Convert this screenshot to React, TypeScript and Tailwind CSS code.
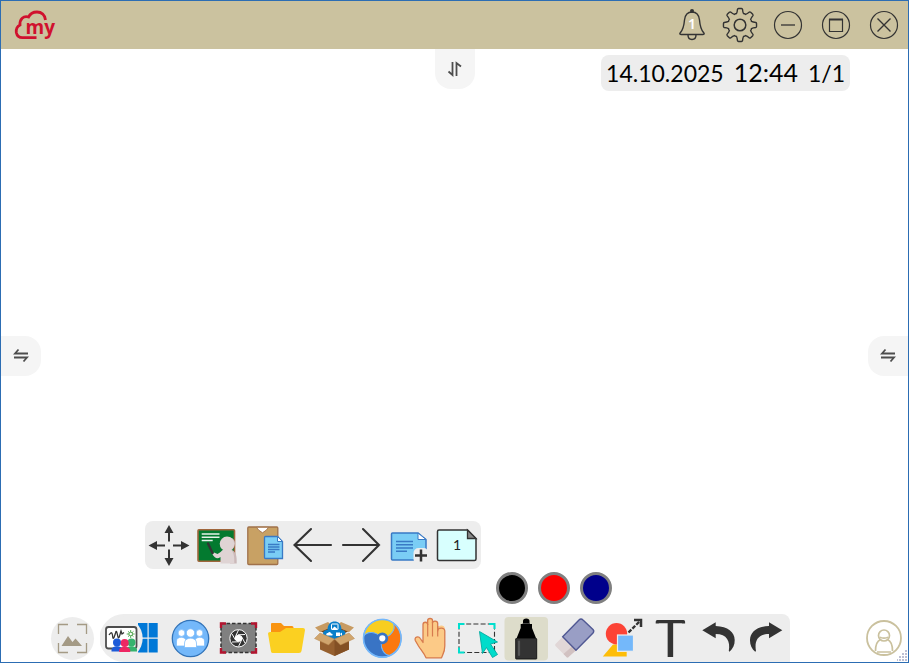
import type { ReactNode } from "react";
import clsx from "clsx";

interface IconProps {
  children: ReactNode;
  width?: number;
  height?: number;
}

const Icon = ({ children, width = 48, height = 48 }: IconProps) => (
  <svg width={width} height={height} viewBox={`0 0 ${width} ${height}`} fill="none" aria-hidden="true" className="block shrink-0">
    {children}
  </svg>
);

interface ToolButtonProps {
  label: string;
  children: ReactNode;
  className?: string;
}

const ToolButton = ({ label, children, className }: ToolButtonProps) => (
  <button type="button" aria-label={label} className={clsx("flex h-12 shrink-0 items-center justify-center", className ?? "w-12")}>
    {children}
  </button>
);

// Outline of an eight-toothed cog around (24, 24)
const gearPath = () => {
  const at = (r: number, deg: number) => {
    const a = (deg * Math.PI) / 180;
    return `${(24 + r * Math.cos(a)).toFixed(2)} ${(24 + r * Math.sin(a)).toFixed(2)}`;
  };
  let d = `M${at(12, -17)}`;
  for (let i = 0; i < 8; i++) {
    const c = i * 45;
    d += `Q${at(13.2, c - 12)} ${at(16, c - 9)}Q${at(16.6, c - 8)} ${at(16.6, c - 5)}L${at(16.6, c + 5)}Q${at(16.6, c + 8)} ${at(16, c + 9)}Q${at(13.2, c + 12)} ${at(12, c + 17)}Q${at(12.4, c + 22.5)} ${at(12, c + 28)}`;
  }
  return `${d}Z`;
};

const Logo = () => (
  <svg width="60" height="48" viewBox="0 0 60 48" role="img" aria-label="my" className="block">
    <path
      d="M44.500 19C44 14 40.500 11 36 11C32 11 29 13 27.500 16C22.500 14.500 18.500 18 19 24C16 25.500 15 28.500 15.300 31.500C16 35 18 36.700 21.500 36.700H35.500"
      fill="none"
      stroke="#d0112e"
      strokeWidth="2.8"
    />
    <text x="24.500" y="32.500" fontSize="19" fontWeight="700" fill="#d0112e" fontFamily="'Open Sans', sans-serif">
      my
    </text>
  </svg>
);

const TitleBar = () => (
  <header className="flex h-12 shrink-0 items-center justify-between bg-[#cbc29f]">
    <Logo />
    <nav className="flex" aria-label="Window">
      <ToolButton label="Notifications">
        <Icon>
          <circle cx="24" cy="10" r="2" fill="#333" />
          <path
            d="M24 11C19 11 17 14.500 16.500 19C16 25 15.500 28 12.500 31.500C11.500 32.700 11.500 33.500 13 33.500H35C36.500 33.500 36.500 32.700 35.500 31.500C32.500 28 32 25 31.500 19C31 14.500 29 11 24 11ZM20 34C20 40 28 40 28 34"
            stroke="#333"
            strokeWidth="1.4"
          />
          <text x="24" y="28" textAnchor="middle" fontSize="14" fontWeight="600" fill="#fff" fontFamily="'Noto Sans', sans-serif">
            1
          </text>
        </Icon>
      </ToolButton>
      <ToolButton label="Settings">
        <Icon>
          <path d={gearPath()} stroke="#333" strokeWidth="1.4" />
          <circle cx="24" cy="24" r="5.8" stroke="#333" strokeWidth="1.5" />
        </Icon>
      </ToolButton>
      <ToolButton label="Minimize">
        <Icon>
          <circle cx="24" cy="24" r="13.5" stroke="#333" strokeWidth="1.2" />
          <path d="M17 24H31" stroke="#333" strokeWidth="1.3" />
        </Icon>
      </ToolButton>
      <ToolButton label="Maximize">
        <Icon>
          <circle cx="24" cy="24" r="13.5" stroke="#333" strokeWidth="1.2" />
          <path d="M17.500 18V30.500H30.500V18" stroke="#333" strokeWidth="1.2" />
          <path d="M17 18.500H31" stroke="#333" strokeWidth="2" />
        </Icon>
      </ToolButton>
      <ToolButton label="Close">
        <Icon>
          <circle cx="24" cy="24" r="13.5" stroke="#333" strokeWidth="1.2" />
          <path d="M17.500 17.500L30.500 30.500M30.500 17.500L17.500 30.500" stroke="#333" strokeWidth="1.4" />
        </Icon>
      </ToolButton>
    </nav>
  </header>
);

const SwapIcon = () => (
  <Icon width={16} height={16}>
    <path d="M15 5.500H2L5.500 1.500M1 9.500H14L10.500 13.500" stroke="#4d4d4d" strokeWidth="1.8" />
  </Icon>
);

const PageBar = () => (
  <div className="flex self-start rounded-lg bg-[#ededed]">
    <ToolButton label="Move toolbar">
      <Icon>
        <path d="M10 24.500H20M28 24.500H38M24 10V20.500M24 28.500V38" stroke="#333" strokeWidth="2" />
        <path d="M3.500 24.500L12 20V29ZM44.500 24.500L36 20V29ZM24 4L19.500 12H28.500ZM24 45L19.500 37H28.500Z" fill="#333" />
      </Icon>
    </ToolButton>
    <ToolButton label="Lesson">
      <Icon>
        <rect x="5" y="8.700" width="36.500" height="31.500" rx="1" fill="#037a2f" stroke="#a0663c" strokeWidth="1.600" />
        <path d="M8.700 13H26.500M8.700 16.300H26.500M8.700 19.500H19.700" stroke="#e6f2e9" strokeWidth="1.500" />
        <path d="M35 16C43 16.500 44 24 39 29C43 31 44 35 43.700 42.500H37Z" fill="#cbb9b9" />
        <circle cx="34" cy="22.800" r="7.300" fill="#dfd4d4" />
        <path d="M31 28H37.500C40.500 31 41.500 34 41.300 42.500H27.500V36C24 38.500 22 37 19.500 33.500L21 31.500L24.500 33C27 32 28 30 31 28Z" fill="#dfd4d4" />
        <path d="M15 22.500L19.500 32" stroke="#333" strokeWidth="2.400" strokeLinecap="round" />
      </Icon>
    </ToolButton>
    <ToolButton label="Paste">
      <Icon>
        <rect x="6.800" y="6" width="30" height="37.500" rx="1" fill="#c8a164" stroke="#a0714a" strokeWidth="1.300" />
        <path d="M15.500 6.300L17.500 9L21.500 11.800L25.500 9L27.500 6.300Z" fill="#fff" stroke="#a0714a" strokeWidth="0.900" />
        <path d="M24.500 15.500H36.500L41.500 20.500V37.500H24.500C23.500 37.500 23.500 37.500 23.500 36.500V16.500C23.500 15.500 23.500 15.500 24.500 15.500Z" fill="#7acdf5" stroke="#397ac5" strokeWidth="1.300" />
        <path d="M36.500 15.500V20.500H41.500Z" fill="#fff" stroke="#397ac5" />
        <path d="M27 23.500H38.500M27 26H38.500M27 28.500H38.500M27 31H34" stroke="#397ac5" strokeWidth="1.300" />
      </Icon>
    </ToolButton>
    <ToolButton label="Previous page">
      <Icon>
        <path d="M42 24H5.500M22 8L5.500 24L22 40" stroke="#333" strokeWidth="2.100" strokeLinecap="round" />
      </Icon>
    </ToolButton>
    <ToolButton label="Next page">
      <Icon>
        <path d="M6 24H42M26 8L42 24L26 40" stroke="#333" strokeWidth="2.100" strokeLinecap="round" />
      </Icon>
    </ToolButton>
    <ToolButton label="Add page">
      <Icon>
        <path d="M7.500 12H33L41 18.500V39H7.500Q6.500 39 6.500 38V13Q6.500 12 7.500 12Z" fill="#7acdf5" stroke="#397ac5" strokeWidth="1.500" />
        <path d="M33 12V18.500H41Z" fill="#fff" stroke="#397ac5" />
        <path d="M11 20.500H28M11 23.700H28M11 27H28M11 30.300H22" stroke="#397ac5" strokeWidth="1.500" />
        <rect x="28.500" y="27" width="15" height="16" rx="5" fill="#ededed" />
        <path d="M30 34.500H42M36 28.500V40.500" stroke="#333" strokeWidth="2.500" />
      </Icon>
    </ToolButton>
    <ToolButton label="Page 1">
      <Icon>
        <path d="M6 9H34.500L43 17.500V38Q43 39.500 41.500 39.500H6Q4.500 39.500 4.500 38V10.500Q4.500 9 6 9Z" fill="#d8fffe" stroke="#333" strokeWidth="1.500" />
        <path d="M34.500 9L43 17.500H34.500Z" fill="#888" stroke="#333" strokeWidth="1.300" />
        <text x="24" y="29" textAnchor="middle" fontSize="14" fill="#222" fontFamily="'Lato', sans-serif">
          1
        </text>
      </Icon>
    </ToolButton>
  </div>
);

const penColors = [
  { name: "Black", className: "bg-black" },
  { name: "Red", className: "bg-[#ff0000]" },
  { name: "Blue", className: "bg-[#00008b]" },
];

const ColorPicker = () => (
  <div className="mt-[3px] mb-[10px] ml-[351px] flex gap-[10px] self-start">
    {penColors.map((color) => (
      <button
        key={color.name}
        type="button"
        aria-label={color.name}
        className={clsx("size-8 rounded-full border-[3px] border-[#808080]", color.className)}
      />
    ))}
  </div>
);

const Person = ({ x, y, fill }: { x: number; y: number; fill: string }) => (
  <g transform={`translate(${x} ${y})`} fill={fill}>
    <circle r="4" />
    <path d="M-5.500 9V7.500C-5.500 2.500 5.500 2.500 5.500 7.500V9Z" />
  </g>
);

const swirl = "M24.300 24.300C18 17 9 17 5.500 22.500A18.900 18.900 0 0 1 35.300 8.900C38.300 14.700 33.800 22.500 24.300 24.300Z";

const Dock = () => (
  <div className="ml-[6px] flex rounded-l-3xl rounded-tr-lg bg-[#ededed]">
    <ToolButton label="Whiteboard and desktop" className="w-[66px]">
      <Icon width={66}>
        <path d="M38 9H47.500V23.500H38ZM48.700 9H57.700V23.500H48.700ZM38 24.700H47.500V38.500H38ZM48.700 24.700H57.700V38.500H48.700Z" fill="#0078d7" />
        <circle cx="21" cy="24.300" r="21.700" fill="#ededed" />
        <rect x="6" y="13" width="30.500" height="21.500" rx="2.500" fill="#fff" stroke="#4d4d4d" strokeWidth="1.800" />
        <path d="M9 21C11 18 12 18 12.500 21C13 27 14 24 15.500 19C16.500 15 17 19 18 23C19 26 20 20 21 17L22 20L24 18.500" stroke="#333" strokeWidth="1.300" />
        <path d="M30.700 16V24M26.700 20H34.700M28 17.300L33.500 22.700M33.500 17.300L28 22.700" stroke="#57aa55" strokeWidth="1" />
        <circle cx="30.700" cy="20" r="1.800" fill="#fff" stroke="#57aa55" strokeWidth="1" />
        <Person x={17} y={28.5} fill="#1d5bd8" />
        <Person x={31.5} y={28.5} fill="#35b36d" />
        <Person x={24.7} y={29} fill="#ee2763" />
      </Icon>
    </ToolButton>
    <ToolButton label="Participants">
      <Icon>
        <circle cx="24.500" cy="24.500" r="18.200" fill="#74b8fa" stroke="#3273b8" strokeWidth="1.300" />
        <g fill="#fff" stroke="#74b8fa" strokeWidth="0.700">
          <circle cx="15.500" cy="19" r="3.400" />
          <circle cx="33.500" cy="19" r="3.400" />
          <path d="M10.500 32V27C10.500 22 20 22 20 27V32ZM29 32V27C29 22 38.500 22 38.500 27V32Z" />
          <circle cx="24.500" cy="19" r="4.200" />
          <path d="M18.500 33.500V29C18.500 22.500 30.500 22.500 30.500 29V33.500Z" />
        </g>
      </Icon>
    </ToolButton>
    <ToolButton label="Screen capture">
      <Icon>
        <rect x="7" y="9.500" width="35" height="29" fill="#808080" stroke="#333" strokeWidth="1.500" strokeDasharray="3.500 2" />
        <path d="M7 14V9.500H12M37 9.500H42V14M42 34V38.500H37M12 38.500H7V34" stroke="#b3142f" strokeWidth="2.400" />
        <circle cx="24.500" cy="24.300" r="8.700" fill="#333" stroke="#fff" strokeWidth="1" />
        <path d="M24.500 20.800L27.500 22.500V26L24.500 27.800L21.500 26V22.500Z" fill="#fff" stroke="#fff" />
        <path d="M24.500 20.800L31 20.500M27.500 22.500L31 29M27.500 26L24.500 32.500M24.500 27.800L18 28M21.500 26L18 20M21.500 22.500L24.500 16" stroke="#fff" strokeWidth="1" />
      </Icon>
    </ToolButton>
    <ToolButton label="Open file">
      <Icon>
        <path d="M9 10Q9 9 10 9H19L22 12H30Q31.500 12 31.500 13.500V24H9Z" fill="#f99411" />
        <path d="M6 19.500Q6 18 8 18H18L24 14H41Q43 14 43 16L39.500 37Q39.200 39 37 39H11Q9.300 39 9 37.500Z" fill="#fbd021" />
      </Icon>
    </ToolButton>
    <ToolButton label="Resources">
      <Icon>
        <path d="M10 22H39V35.500L24.500 42L10 35.500Z" fill="#96602f" />
        <path d="M24.500 24L39 20V35.500L24.500 42Z" fill="#835024" />
        <path d="M10 17L24.500 12L39 17L24.500 24Z" fill="#73451f" />
        <path d="M10 18L23 12.500L18 8L5 13.500ZM39 18L26 12.500L31 8L44 13.500Z" fill="#c89b62" />
        <path d="M16 22C11 21 13 15.500 17.500 16C17.500 10 21 7.500 24.500 7.500C28.500 7.500 31.500 10 31.500 16C36.500 16 36.500 21 33 22L24.500 26Z" fill="#087fca" />
        <rect x="21.500" y="10" width="6.500" height="5.500" rx="0.500" stroke="#fff" />
        <path d="M22 15L24.500 12.500L27.500 15Z" fill="#fff" />
        <path d="M17 21.500C15.500 21 16.500 18.500 18 19C19 17 21 18 21 19.500C23 19.500 23 21.500 22 21.500ZM26 18.500H30V22H26ZM30 20L32 18.500V22Z" fill="#fff" />
        <path d="M10 19L24.500 25L18.500 31L4.500 24.500ZM39 19L24.500 25L30.500 31L44.500 24.500Z" fill="#d0a56d" stroke="#b98851" strokeWidth="0.500" />
      </Icon>
    </ToolButton>
    <ToolButton label="Browser">
      <Icon>
        <circle cx="24.300" cy="24.300" r="19" fill="#3974c5" />
        <g stroke="#74b7fa" strokeWidth="0.900">
          <path d={swirl} fill="#f8ce20" />
          <path d={swirl} fill="#fb780f" transform="rotate(120 24.300 24.300)" />
          <path d={swirl} fill="#3974c5" transform="rotate(240 24.300 24.300)" />
        </g>
        <circle cx="24.300" cy="24.300" r="18.800" stroke="#74b7fa" strokeWidth="1.600" />
        <circle cx="24.300" cy="24.300" r="4.500" fill="#fff" stroke="#3974c5" strokeWidth="2.800" />
      </Icon>
    </ToolButton>
    <ToolButton label="Pan">
      <Icon>
        <path
          d="M17 27V11C17 7.500 21.500 7.500 21.500 11V7C21.500 3.500 26.500 3.500 26.500 7V9C26.500 6 31 6 31 9V15C31 11 39 10 38.800 15V33C38.800 39 36.500 41 35.500 43.500H20.500C18 38 15 36 13 33C11 30 9 28 9 25C9 21.500 14 22 15 26Z"
          fill="#fcca87"
        />
        <path
          d="M20 43.800C18 39 15 36 12.500 32L9.300 26.500C8 23 12.500 21.500 14.300 24.500L17 28.500V10.500C17 7.500 21.700 7.500 21.700 10.500V6.500C21.700 3.800 26.500 3.800 26.500 6.500V9C26.500 6.500 31.700 6.500 31.700 9.500V17C31.700 13.500 38.800 13 38.800 17V32C38.800 38 37 40 35.500 43.800Z"
          fill="#fcca87"
          stroke="#d77b4e"
          strokeWidth="1.300"
          strokeLinejoin="round"
        />
        <path d="M21.700 10V22.500M26.500 8V22.500M31.700 12V22.500" stroke="#d77b4e" strokeWidth="1.200" />
      </Icon>
    </ToolButton>
    <ToolButton label="Select">
      <Icon>
        <rect x="5" y="10" width="35.500" height="28.500" stroke="#333" strokeWidth="1.100" strokeDasharray="5 2.200" />
        <path d="M5 15V10H10.500M35 10H40.500V15M10.500 38.500H5V33.500" stroke="#00dfce" strokeWidth="2" />
        <path d="M25.500 17.500L43.500 28L36.500 30L43.500 40.500L38.500 43.500L32.500 33.500L28.500 39.500Z" fill="#00dccb" stroke="#00aaa0" strokeWidth="0.900" />
      </Icon>
    </ToolButton>
    <ToolButton label="Marker">
      <Icon>
        <rect x="2.500" y="3" width="43.500" height="43.500" rx="4" fill="#dddcca" />
        <path d="M21 7Q21 4.500 24.300 4.500Q27.500 4.500 27.500 7V10H30V14L34 24H14.700L18.700 14V10H21Z" fill="#000" />
        <path d="M20.500 9.500H28" stroke="#555" strokeWidth="0.800" />
        <rect x="13.700" y="24.500" width="21" height="20.500" rx="0.500" fill="#333" stroke="#111" strokeWidth="0.900" />
        <path d="M17 27.500V41" stroke="#555" strokeWidth="2.200" strokeLinecap="round" />
      </Icon>
    </ToolButton>
    <ToolButton label="Eraser">
      <Icon>
        <path d="M12.700 22.700L26 36.300L18.500 43Q17.500 44 16.500 43L5.500 32Q4.500 31 5.500 30Z" fill="#e1d7d7" />
        <path d="M22 32.500L26 36.300L18.500 43Q17.500 44 16.500 43L13.500 40Z" fill="#d1c1c1" />
        <path d="M12.700 22.700L29 6Q31 4 33 6L43 15.500Q44.500 17 43 19L26 36.300Z" fill="#999ec5" stroke="#505893" strokeWidth="1.400" />
      </Icon>
    </ToolButton>
    <ToolButton label="Shapes">
      <Icon>
        <path d="M15 30.500H28.700V42.500H4.800Z" fill="#fdbd08" />
        <circle cx="18.500" cy="19.700" r="10.700" fill="#fc4336" />
        <rect x="19.500" y="21" width="16" height="16.300" fill="#74b8fa" stroke="#ededed" strokeWidth="1.200" />
        <path d="M30.500 18.500L43 6" stroke="#333" strokeWidth="2.300" strokeDasharray="4 1.500" />
        <path d="M36 6H43V13" stroke="#333" strokeWidth="2.500" />
      </Icon>
    </ToolButton>
    <ToolButton label="Text">
      <Icon>
        <path d="M11.300 9.500V7.700H37.500V9.500" stroke="#333" strokeWidth="3.200" strokeLinejoin="round" />
        <path d="M24.400 8V43" stroke="#333" strokeWidth="5.500" />
      </Icon>
    </ToolButton>
    <ToolButton label="Undo">
      <Icon>
        <path d="M8.300 16.300L21.700 8.300V12C34 12.500 40.500 18 40.700 26C40.800 31 39 34.500 35.500 37.700L34.800 37C36.500 27.500 33 20 21.700 20V24.300Z" fill="#333" />
      </Icon>
    </ToolButton>
    <ToolButton label="Redo">
      <Icon>
        <path d="M40.300 16.300L27 8.300V12C14.700 12.500 8.200 18 8 26C7.900 31 9.700 34.500 13.200 37.700L14 37C12.200 27.500 15.700 20 27 20V24.300Z" fill="#333" />
      </Icon>
    </ToolButton>
  </div>
);

const UserButton = () => (
  <button type="button" aria-label="User" className="mr-[6px] ml-auto shrink-0">
    <Icon width={36} height={36}>
      <circle cx="18" cy="18" r="17" stroke="#cac19e" strokeWidth="1.800" />
      <circle cx="18" cy="15.500" r="5.500" stroke="#cac19e" strokeWidth="1.700" />
      <path d="M14.500 19.500C11 21 9.500 25 9.500 31M21.500 19.500C25 21 26.500 25 26.500 31M11 32H25M14 17C15.500 18.500 20.500 18.500 22 17" stroke="#cac19e" strokeWidth="1.700" />
    </Icon>
  </button>
);

const App = () => (
  <div className="flex h-screen flex-col border border-[#2c6db3] bg-white">
    <TitleBar />
    <main className="relative flex flex-1 flex-col">
      <div className="grid flex-1 basis-0 grid-cols-[1fr_auto_1fr] items-start">
        <button
          type="button"
          aria-label="Swap top"
          className="col-start-2 flex size-10 items-center justify-center rounded-b-2xl bg-[#f5f5f5]"
        >
          <Icon width={16} height={16}>
            <path d="M5.500 1V14L1.500 10.500M9.500 15V2L14 5.500" stroke="#4d4d4d" strokeWidth="1.8" />
          </Icon>
        </button>
        <div className="mt-[6px] mr-[58px] flex h-9 items-center gap-[10px] justify-self-end rounded-lg bg-[#ededed] px-[5px] font-['Lato',sans-serif] whitespace-nowrap text-black">
          <span className="text-[23px]">14.10.2025</span>
          <span className="text-[25px]">12:44</span>
          <span className="text-[23px]">1/1</span>
        </div>
      </div>
      <div className="flex justify-between">
        <button type="button" aria-label="Swap left" className="flex size-10 items-center justify-center rounded-r-2xl bg-[#f5f5f5]">
          <SwapIcon />
        </button>
        <button type="button" aria-label="Swap right" className="flex size-10 items-center justify-center rounded-l-2xl bg-[#f5f5f5]">
          <SwapIcon />
        </button>
      </div>
      <div className="flex flex-1 basis-0 flex-col justify-end">
        <div className="ml-36 flex flex-col">
          <PageBar />
          <ColorPicker />
        </div>
        <div className="flex items-center">
          <button type="button" aria-label="Background" className="ml-[50px] shrink-0 rounded-full bg-[#ededed]">
            <Icon width={43} height={43}>
              <path d="M7.500 17V7.500H17M26 7.500H35.500V17M35.500 26V35.500H26M17 35.500H7.500V26" stroke="#a49a85" strokeWidth="1.300" />
              <path d="M10.500 29L17 19L21.500 25L24.500 21.500L31 29Z" fill="#a49a85" />
            </Icon>
          </button>
          <Dock />
          <UserButton />
        </div>
      </div>
      {/* Resize grip */}
      <svg width="10" height="11" viewBox="0 0 10 11" aria-hidden="true" className="absolute right-[1px] bottom-[1px]">
        <path d="M8 1H10M5 4H7M8 4H10M2 7H4M5 7H7M8 7H10M0 10H1M2 10H4M5 10H7M8 10H10" stroke="#a9acc6" strokeWidth="1.500" />
      </svg>
    </main>
  </div>
);

export default App;
